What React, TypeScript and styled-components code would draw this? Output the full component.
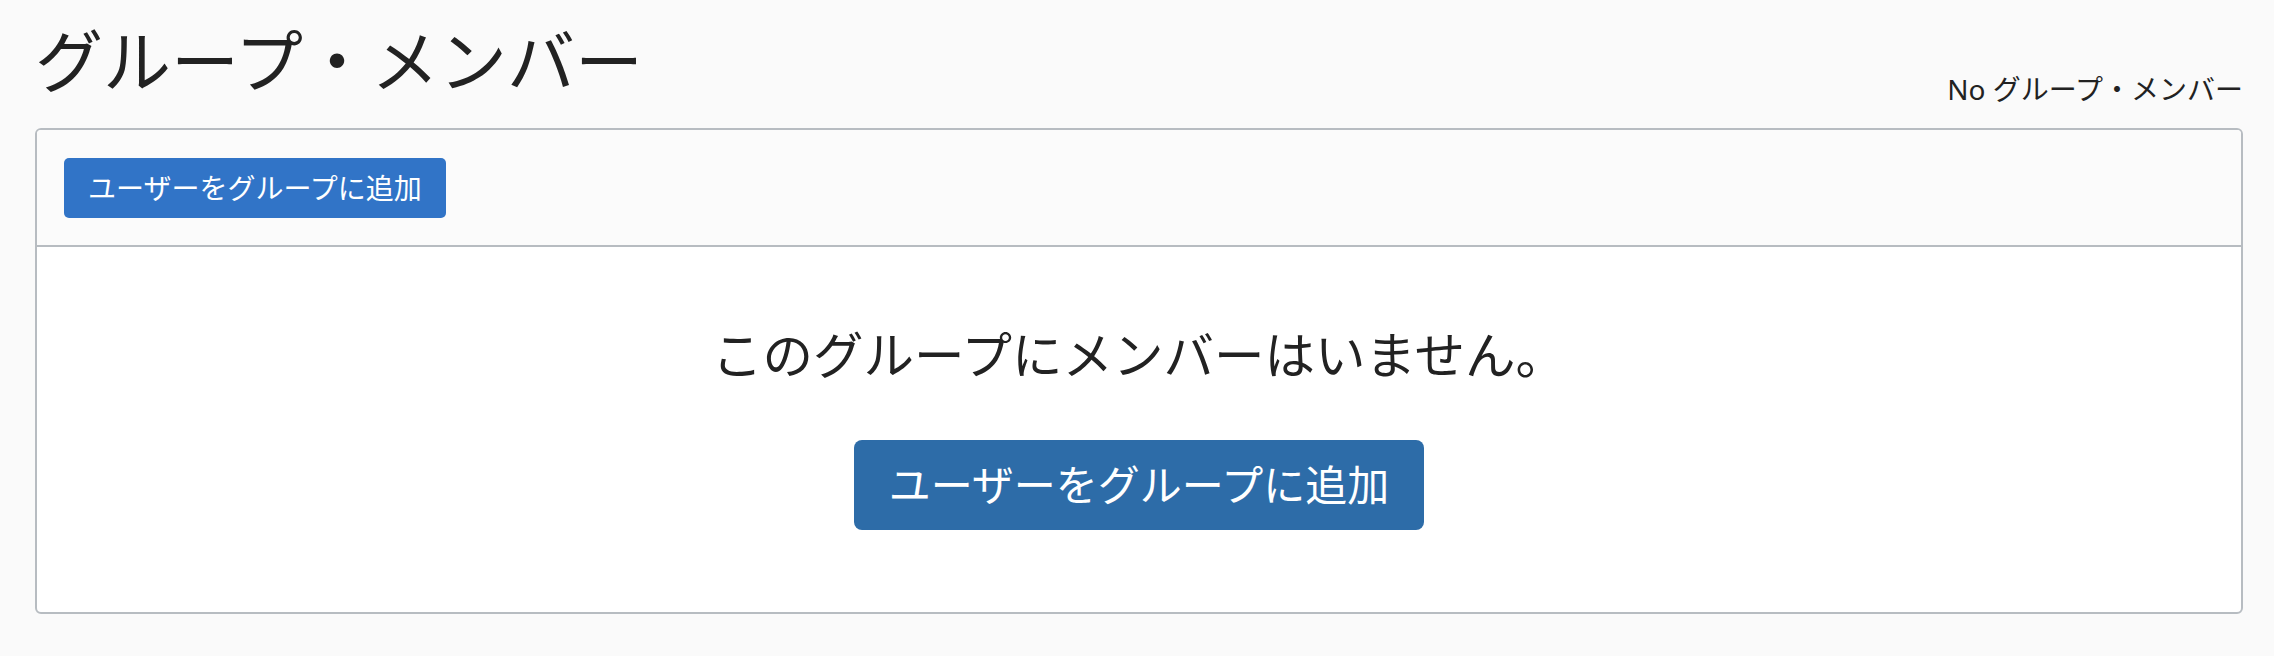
import React from 'react';
import styled, { createGlobalStyle } from 'styled-components';

const GlobalStyle = createGlobalStyle`
  html, body {
    margin: 0;
    padding: 0;
    background: #fafafa;
  }
  body {
    font-family: "Noto Sans", "Noto Sans CJK JP", sans-serif;
    color: #222;
  }
`;

const Page = styled.div`
  padding: 20px 31px 0 35px;
`;

const PageHeader = styled.div`
  display: flex;
  justify-content: space-between;
  align-items: flex-end;
  margin-bottom: 18px;
`;

const Title = styled.h1`
  margin: 0 0 8px;
  font-size: 68px;
  font-weight: 400;
  line-height: 82px;
  letter-spacing: 0;
`;

const MemberCount = styled.div`
  font-size: 28px;
  line-height: 42px;
`;

const Panel = styled.section`
  border: 2px solid #b7bcc1;
  border-radius: 6px;
  background: #fff;
  overflow: hidden;
`;

const Toolbar = styled.div`
  display: flex;
  align-items: center;
  padding: 28px 27px 27px;
  background: #fbfbfb;
  border-bottom: 2px solid #b7bcc1;
`;

const Button = styled.button<{ $size?: 'sm' | 'lg' }>`
  font-family: inherit;
  color: #fff;
  border: none;
  cursor: pointer;
  background: ${({ $size }) => ($size === 'lg' ? '#2d6ca8' : '#3174c7')};
  font-size: ${({ $size }) => ($size === 'lg' ? '42px' : '28px')};
  line-height: ${({ $size }) => ($size === 'lg' ? '56px' : '42px')};
  padding: ${({ $size }) => ($size === 'lg' ? '17px 35px' : '9px 24px')};
  border-radius: ${({ $size }) => ($size === 'lg' ? '8px' : '5px')};
`;

const EmptyState = styled.div`
  display: flex;
  flex-direction: column;
  align-items: center;
  padding: 72px 0 82px;
`;

const EmptyMessage = styled.p`
  margin: 0 0 49px;
  font-size: 50.5px;
  line-height: 72px;
`;

export default function App() {
  return (
    <>
      <GlobalStyle />
      <Page>
        <PageHeader>
          <Title>グループ・メンバー</Title>
          <MemberCount>No グループ・メンバー</MemberCount>
        </PageHeader>
        <Panel>
          <Toolbar>
            <Button>ユーザーをグループに追加</Button>
          </Toolbar>
          <EmptyState>
            <EmptyMessage>このグループにメンバーはいません。</EmptyMessage>
            <Button $size="lg">ユーザーをグループに追加</Button>
          </EmptyState>
        </Panel>
      </Page>
    </>
  );
}
